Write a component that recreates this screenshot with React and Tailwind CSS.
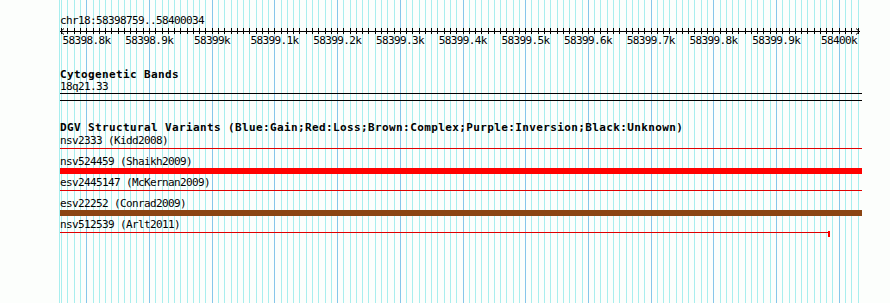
import React from "react";

// bp -> page x
const xOf = (bp) => 86.3 + (bp - 58398800) * 0.627;

const gridLines = [];
for (let bp = 58398760; bp <= 58400030; bp += 10) {
  gridLines.push({ x: Math.round(xOf(bp)), major: bp % 100 === 0 });
}

const rulerLabels = [
  "58398.8k", "58398.9k", "58399k", "58399.1k", "58399.2k", "58399.3k", "58399.4k",
  "58399.5k", "58399.6k", "58399.7k", "58399.8k", "58399.9k", "58400k",
];

const features = [
  { name: "nsv2333 (Kidd2008)", kind: "line", width: 802 },
  { name: "nsv524459 (Shaikh2009)", kind: "bar", color: "bg-[#ff0000]" },
  { name: "esv2445147 (McKernan2009)", kind: "line", width: 802 },
  { name: "esv22252 (Conrad2009)", kind: "bar", color: "bg-[#8b4513]" },
  { name: "nsv512539 (Arlt2011)", kind: "line", width: 770, cap: true },
];

const Grid = () => (
  <svg className="absolute left-0 top-0" width="890" height="303">
    <rect x="59" y="0" width="1" height="303" fill="#a8eeee" />
    {gridLines.map((g, i) => (
      <rect
        key={i}
        x={g.x}
        y="0"
        width="1"
        height="303"
        fill={g.major ? "#86c6ea" : "#a8eeee"}
      />
    ))}
  </svg>
);

const Ruler = () => (
  <div>
    <div className="h-[11px] leading-[11px] mt-[15px]">chr18:58398759..58400034</div>
    <svg width="802" height="9" className="block">
      <line x1="0" y1="5.5" x2="800" y2="5.5" stroke="#000" />
      <polyline points="4,2.5 0.5,5.5 4,8.5" fill="none" stroke="#000" />
      <polyline points="796,2.5 799.5,5.5 796,8.5" fill="none" stroke="#000" />
      {gridLines.map((g, i) => (
        <line key={i} x1={g.x - 60 + 0.5} y1="2" x2={g.x - 60 + 0.5} y2="8" stroke="#000" />
      ))}
    </svg>
    <div className="relative h-[11px]">
      {rulerLabels.map((t, k) => (
        <span
          key={t}
          className="absolute top-0 leading-[11px] -translate-x-1/2 whitespace-nowrap"
          style={{ left: 26.5 + k * 62.7 }}
        >
          {t}
        </span>
      ))}
    </div>
  </div>
);

const Feature = ({ f }) => (
  <div className="h-[21px]">
    <div className="h-[11px] leading-[11px] whitespace-nowrap">{f.name}</div>
    <div className="mt-[1px] h-[6px] relative">
      {f.kind === "bar" ? (
        <div className={`h-[6px] w-[802px] ${f.color}`} />
      ) : (
        <div className="relative h-[6px]" style={{ width: f.width }}>
          <div className="mt-[2px] h-[1px] w-full bg-[#e00000]" />
          {f.cap && <div className="absolute right-0 -top-[1px] w-[2px] h-[6px] bg-[#ff0000]" />}
        </div>
      )}
    </div>
  </div>
);

export default function App() {
  return (
    <div
      className="relative w-[890px] h-[303px] overflow-hidden bg-[#fcfefc] text-black text-[11px] tracking-[-0.62px]"
      style={{ fontFamily: '"DejaVu Sans Mono", "Liberation Mono", monospace' }}
    >
      <Grid />
      <div className="relative pl-[60px] w-[862px]">
        <Ruler />

        {/* Cytogenetic bands */}
        <div className="mt-[23px] h-[11px] leading-[11px] font-bold tracking-[0.38px]">Cytogenetic Bands</div>
        <div className="mt-[1px] h-[11px] leading-[11px]">18q21.33</div>
        <div className="mt-[1px] h-[8px] w-[802px] border-y border-black" />

        {/* DGV */}
        <div className="mt-[21px] h-[11px] leading-[11px] font-bold tracking-[0.38px] whitespace-nowrap">
          DGV Structural Variants (Blue:Gain;Red:Loss;Brown:Complex;Purple:Inversion;Black:Unknown)
        </div>
        <div className="mt-[2px]">
          {features.map((f) => (
            <Feature key={f.name} f={f} />
          ))}
        </div>
      </div>
    </div>
  );
}
